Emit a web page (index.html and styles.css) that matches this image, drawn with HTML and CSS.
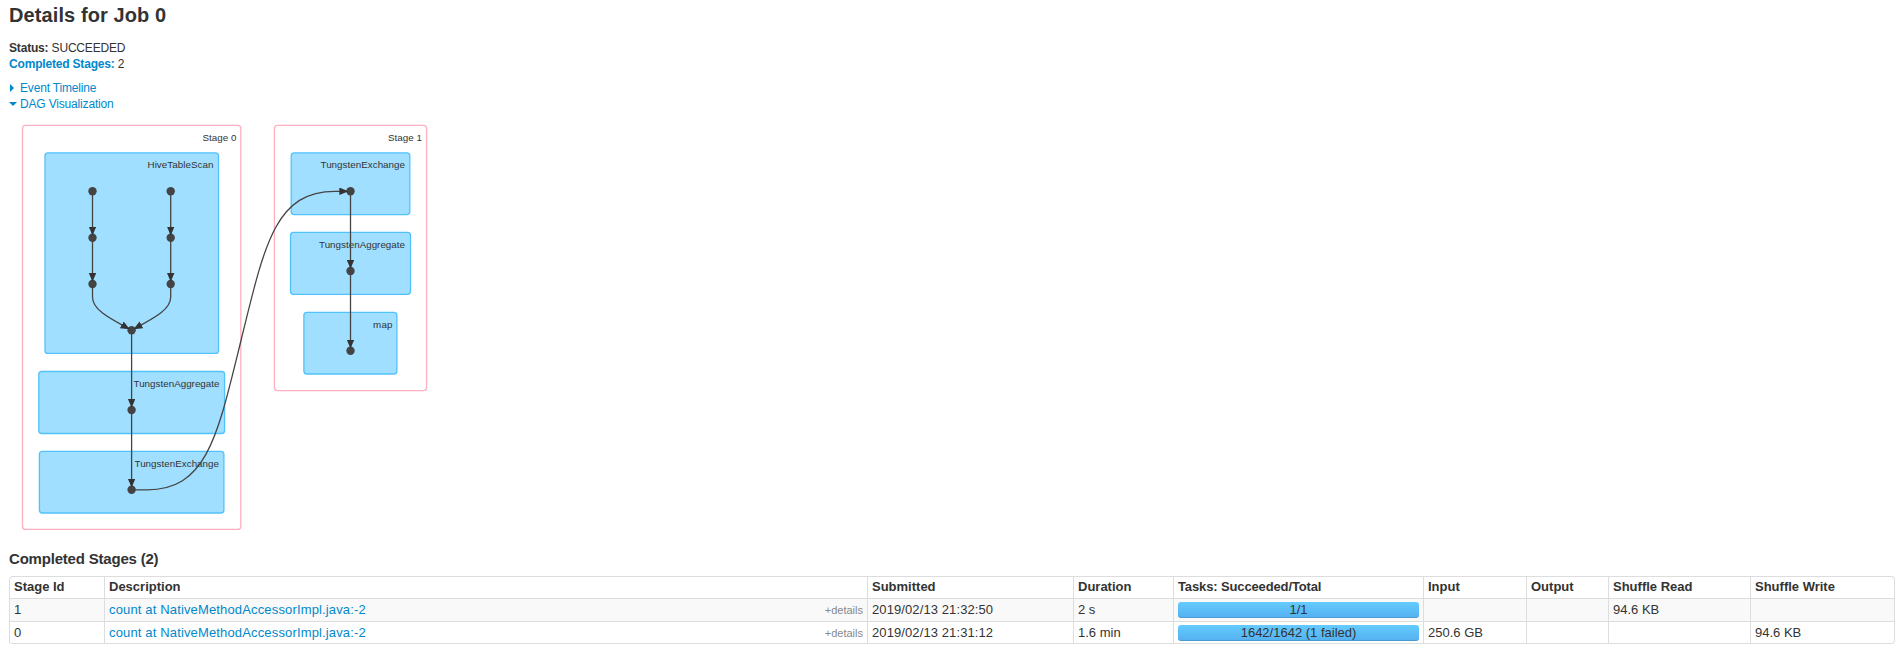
FILE: index.html
```
<!DOCTYPE html>
<html lang="en">
<head>
    <meta charset="UTF-8">
    <title>Details for Job 0</title>
    <link rel="stylesheet" href="styles.css">
</head>
<body>

<div class="container">
    <h3 class="page-title">Details for Job 0</h3>

    <ul class="summary">
        <li><strong>Status:</strong> SUCCEEDED</li>
        <li><a href="#completed"><strong>Completed Stages:</strong></a> 2</li>
    </ul>

    <div class="toggles">
        <a class="toggle" href="#"><span class="arrow arrow-closed"></span>Event Timeline</a>
        <a class="toggle" href="#"><span class="arrow arrow-open"></span>DAG Visualization</a>
    </div>

    <!-- DAG of both stages -->
    <svg class="dag" width="440" height="420" viewBox="0 120 440 420">
        <defs>
            <marker id="arrow" refX="11.2" refY="3.8" markerWidth="9" markerHeight="8" markerUnits="userSpaceOnUse" orient="auto">
                <path d="M0 0L9 3.8L0 7.6z" />
            </marker>
        </defs>

        <g class="stage">
            <rect x="22.5" y="125.4" width="218.3" height="404" rx="3" />
            <rect x="274.4" y="125.4" width="152.2" height="265.2" rx="3" />
        </g>

        <g class="cluster">
            <rect x="45" y="152.8" width="173.5" height="200.6" rx="3" />
            <rect x="38.8" y="371.5" width="185.8" height="62" rx="3" />
            <rect x="39.4" y="451.4" width="184.5" height="61.6" rx="3" />
            <rect x="291.2" y="152.8" width="118.6" height="61.8" rx="3" />
            <rect x="290.5" y="232.4" width="120" height="61.9" rx="3" />
            <rect x="303.9" y="312.3" width="93" height="61.7" rx="3" />
        </g>

        <g class="label">
            <text x="202.5" y="141" textLength="34">Stage 0</text>
            <text x="147.5" y="168" textLength="66">HiveTableScan</text>
            <text x="133.5" y="387" textLength="86">TungstenAggregate</text>
            <text x="134.5" y="467" textLength="84.5">TungstenExchange</text>
            <text x="388" y="141" textLength="34">Stage 1</text>
            <text x="320.5" y="168" textLength="84.5">TungstenExchange</text>
            <text x="319" y="248" textLength="86">TungstenAggregate</text>
            <text x="373" y="328" textLength="19.5">map</text>
        </g>

        <g class="node">
            <circle cx="92.5" cy="191.3" r="4.2" />
            <circle cx="92.5" cy="237.7" r="4.2" />
            <circle cx="92.5" cy="284" r="4.2" />
            <circle cx="170.7" cy="191.3" r="4.2" />
            <circle cx="170.7" cy="237.7" r="4.2" />
            <circle cx="170.7" cy="284" r="4.2" />
            <circle cx="131.6" cy="330.3" r="4.2" />
            <circle cx="131.6" cy="410" r="4.2" />
            <circle cx="131.6" cy="489.8" r="4.2" />
            <circle cx="350.5" cy="191.3" r="4.2" />
            <circle cx="350.5" cy="271" r="4.2" />
            <circle cx="350.5" cy="350.8" r="4.2" />
        </g>

        <g class="edge">
            <path d="M92.5 191.3V237.7" />
            <path d="M92.5 237.7V284" />
            <path d="M170.7 191.3V237.7" />
            <path d="M170.7 237.7V284" />
            <path d="M92.5 284V297C92.5 311 113.2 320 131.6 330.3" />
            <path d="M170.7 284V297C170.7 311 150 320 131.6 330.3" />
            <path d="M131.6 330.3V410" />
            <path d="M131.6 410V489.8" />
            <path d="M350.5 191.3V271" />
            <path d="M350.5 271V350.8" />
            <path d="M131.6 489.8H147C207 489.8 217.5 436.2 241 340.5C264.5 244.8 275 191.3 335 191.3H350.5" />
        </g>
    </svg>

    <h4 class="section-title" id="completed">Completed Stages (2)</h4>

    <table class="stages">
        <colgroup>
            <col class="col-id"><col class="col-desc"><col class="col-submitted"><col class="col-duration"><col class="col-tasks"><col class="col-input"><col class="col-output"><col class="col-read"><col class="col-write">
        </colgroup>
        <thead>
            <tr>
                <th>Stage Id</th>
                <th>Description</th>
                <th>Submitted</th>
                <th>Duration</th>
                <th class="tasks">Tasks: Succeeded/Total</th>
                <th>Input</th>
                <th>Output</th>
                <th>Shuffle Read</th>
                <th>Shuffle Write</th>
            </tr>
        </thead>
        <tbody>
            <tr>
                <td>1</td>
                <td><div class="desc"><a href="#">count at NativeMethodAccessorImpl.java:-2</a><span class="details">+details</span></div></td>
                <td class="submitted">2019/02/13 21:32:50</td>
                <td>2 s</td>
                <td><div class="progress">1/1</div></td>
                <td></td>
                <td></td>
                <td>94.6 KB</td>
                <td></td>
            </tr>
            <tr>
                <td>0</td>
                <td><div class="desc"><a href="#">count at NativeMethodAccessorImpl.java:-2</a><span class="details">+details</span></div></td>
                <td class="submitted">2019/02/13 21:31:12</td>
                <td>1.6 min</td>
                <td><div class="progress">1642/1642 (1 failed)</div></td>
                <td>250.6 GB</td>
                <td></td>
                <td></td>
                <td>94.6 KB</td>
            </tr>
        </tbody>
    </table>
</div>

</body>
</html>
```
FILE: styles.css
```
body {
    margin: 0;
    font-family: Arial, "Liberation Sans", sans-serif;
    font-size: 12px;
    line-height: 16px;
    color: #333;
    background-color: #fff;
}

.container {
    padding: 0 4px 0 9px;
}

a {
    color: #0088cc;
    text-decoration: none;
}

.page-title {
    margin: 0;
    padding-top: 5px;
    font-size: 20px;
    line-height: 20px;
    letter-spacing: 0.1px;
}

.summary {
    list-style: none;
    margin: 15px 0 8px;
    padding: 0;
    letter-spacing: -0.18px;
}

.toggle {
    display: flex;
    align-items: center;
    letter-spacing: -0.17px;
}

.arrow {
    box-sizing: border-box;
    width: 8px;
    height: 8px;
    margin-right: 3px;
    border: 4px solid transparent;
}

.arrow-closed {
    border-left-color: #0088cc;
    margin-left: 1px;
    margin-right: 2px;
}

.arrow-open {
    height: 4px;
    border-bottom: 0;
    border-top-color: #0088cc;
}

/* DAG */
.dag {
    display: block;
    margin: 8px 0 0 -9px;
}

.stage rect {
    fill: #fff;
    stroke: #ffb0c0;
    stroke-width: 1.3px;
}

.cluster rect {
    fill: #a0dfff;
    stroke: #52c2fb;
    stroke-width: 1.3px;
}

.label text {
    font-size: 9.8px;
    fill: #333;
}

.node circle {
    fill: #444;
}

.edge > path {
    fill: none;
    stroke: #444;
    stroke-width: 1.3px;
    marker-end: url(#arrow);
}

#arrow path {
    fill: #333;
}

/* Stages table */
.section-title {
    margin: 9px 0 7px;
    font-size: 15px;
    line-height: 20px;
    letter-spacing: -0.2px;
}

.stages {
    width: 1886px;
    table-layout: fixed;
    border: 1px solid #ddd;
    border-left: 0;
    border-collapse: separate;
    border-spacing: 0;
    border-radius: 4px;
    font-size: 13px;
}

.stages th,
.stages td {
    box-sizing: border-box;
    height: 23px;
    padding: 0 4px;
    border-left: 1px solid #ddd;
    border-top: 1px solid #ddd;
    text-align: left;
    white-space: nowrap;
}

.stages th {
    height: 21px;
    padding-bottom: 2px;
    border-top: 0;
}

.stages tr:last-child td {
    height: 22px;
}

.stages th:first-child {
    border-top-left-radius: 4px;
}

.stages tbody tr:nth-child(odd) td {
    background-color: #f9f9f9;
}

.stages .tasks {
    letter-spacing: -0.13px;
}

.col-id { width: 95px; }
.col-desc { width: 763px; }
.col-submitted { width: 206px; }
.col-duration { width: 100px; }
.col-tasks { width: 250px; }
.col-input { width: 103px; }
.col-output { width: 82px; }
.col-read { width: 142px; }

.desc {
    display: flex;
    justify-content: space-between;
}

.desc a {
    letter-spacing: 0.15px;
}

.submitted {
    letter-spacing: 0.1px;
}

.details {
    font-size: 11px;
    color: #888;
}

.progress {
    height: 16px;
    border-radius: 3px;
    background-image: linear-gradient(#64cbff, #54b0f0);
    box-shadow: inset 0 -1px 0 rgba(0, 0, 0, 0.12);
    text-align: center;
}
```
